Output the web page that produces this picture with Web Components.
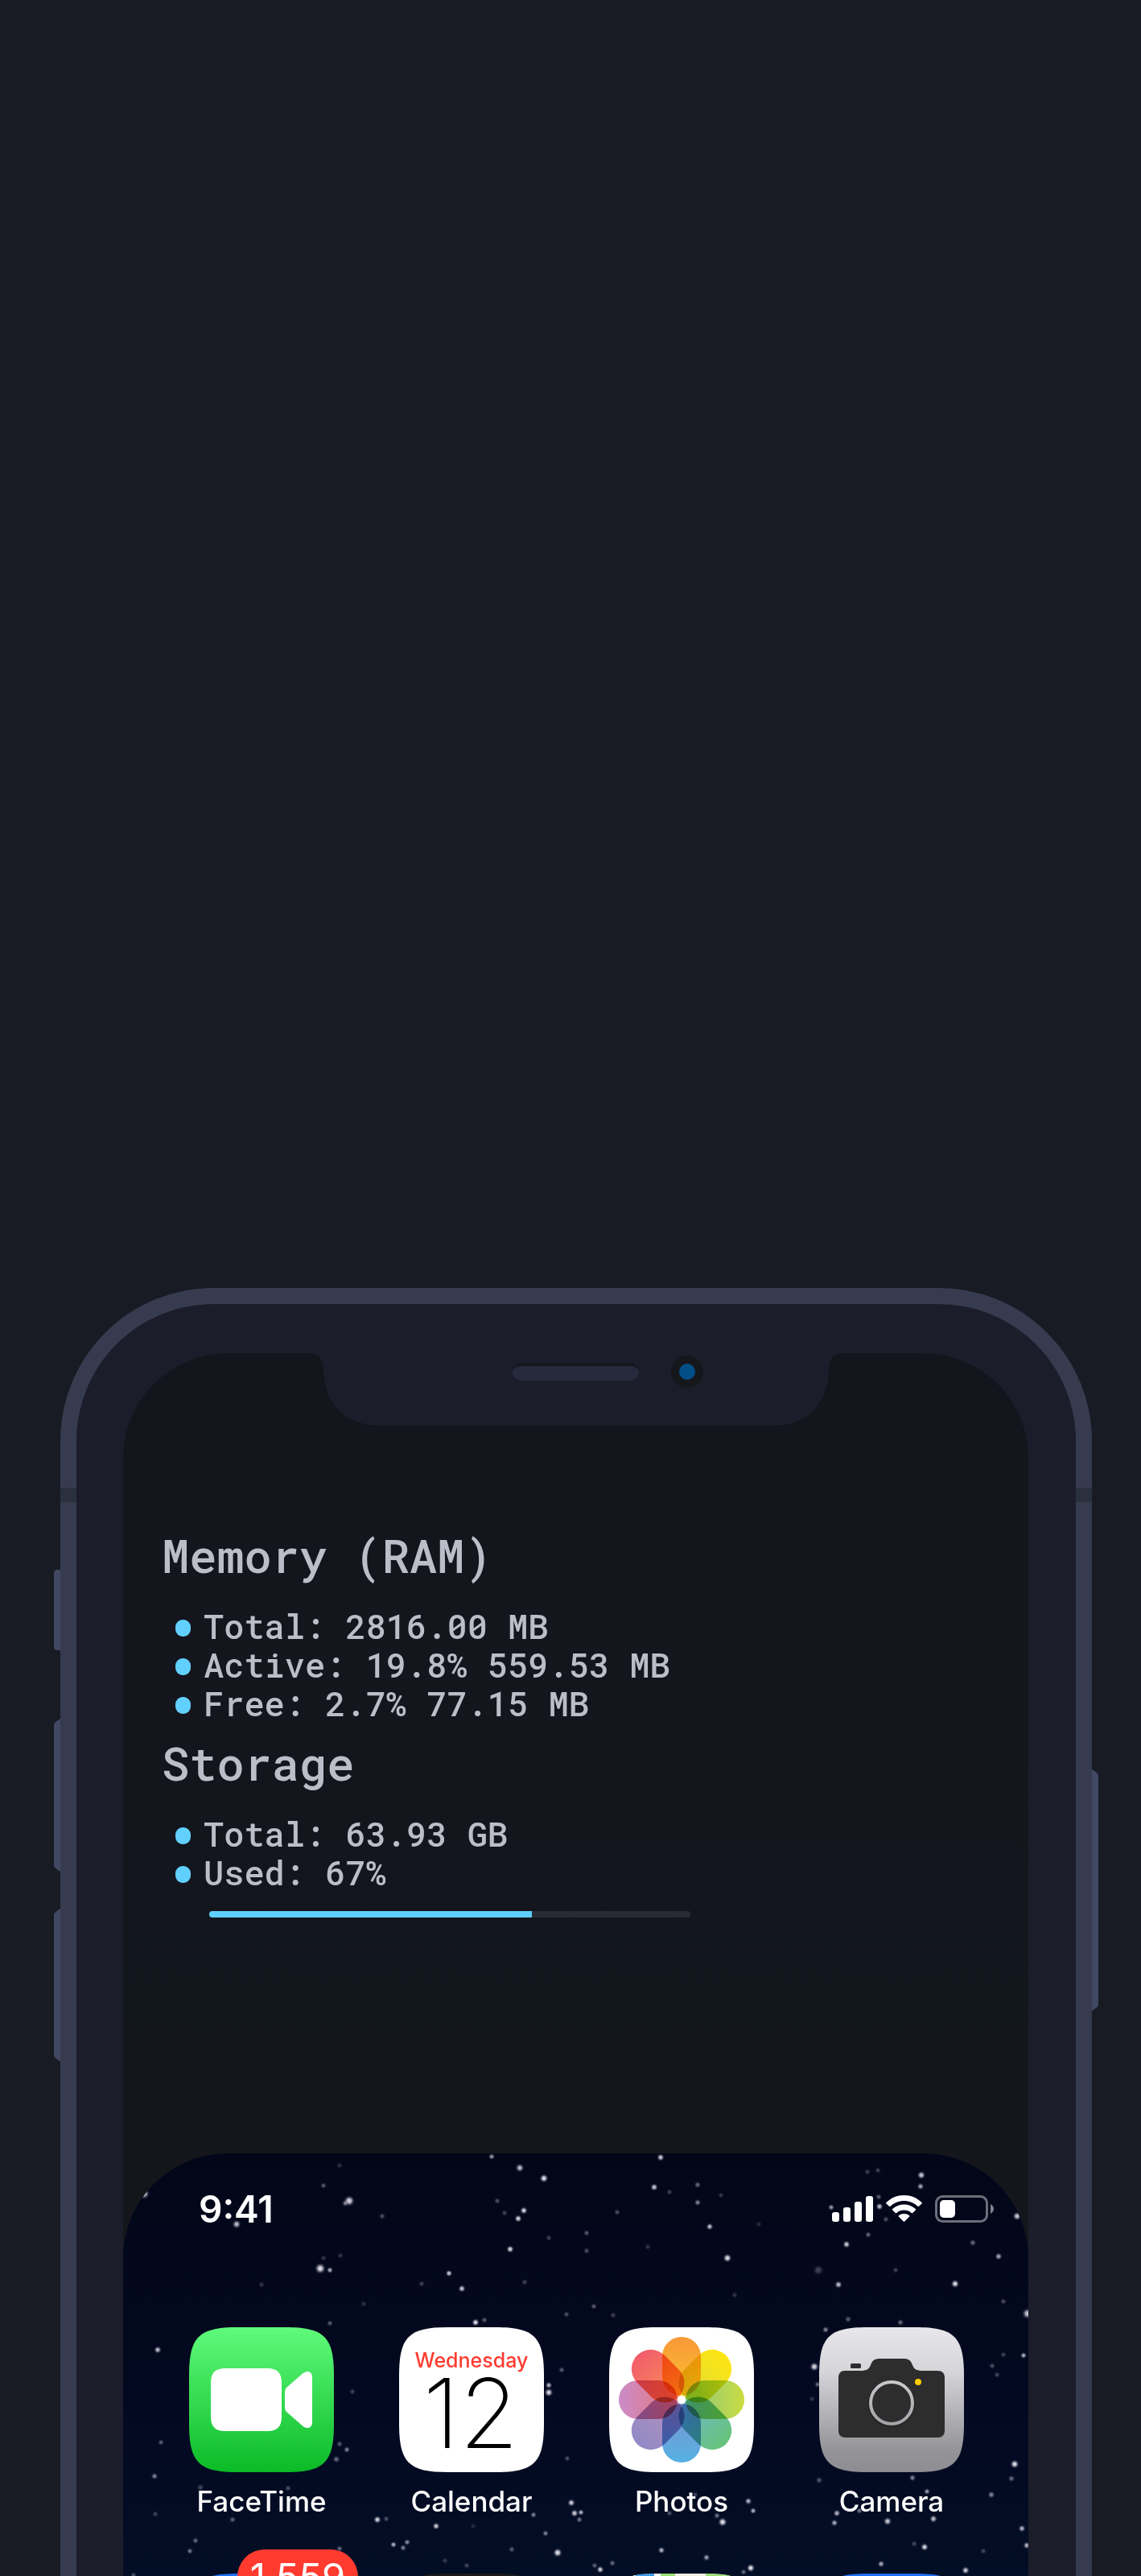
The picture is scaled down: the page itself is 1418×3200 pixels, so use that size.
<!DOCTYPE html>
<html lang="en">
<head>
<meta charset="utf-8">
<meta name="viewport" content="width=device-width, initial-scale=1">
<title>Phone system monitor</title>
<style>
  html, body { margin: 0; background: #181b23; }
  body { font-family: Inter, "Liberation Sans", sans-serif; }
</style>
</head>
<body>
<phone-stage>
  <phone-frame>
    <system-widget>
      <stat-group heading="Memory (RAM)">
        <stat-line>Total: 2816.00 MB</stat-line>
        <stat-line>Active: 19.8% 559.53 MB</stat-line>
        <stat-line>Free: 2.7% 77.15 MB</stat-line>
      </stat-group>
      <stat-group heading="Storage">
        <stat-line>Total: 63.93 GB</stat-line>
        <stat-line>Used: 67%</stat-line>
        <usage-bar slot="after" value="67"></usage-bar>
      </stat-group>
    </system-widget>
    <home-screen>
      <status-bar slot="status">9:41</status-bar>
      <app-icon kind="facetime" label="FaceTime"></app-icon>
      <app-icon kind="calendar" label="Calendar"></app-icon>
      <app-icon kind="photos" label="Photos"></app-icon>
      <app-icon kind="camera" label="Camera"></app-icon>
      <app-icon kind="mail" name="Mail" badge="1,559"></app-icon>
      <app-icon kind="clock" name="Clock"></app-icon>
      <app-icon kind="maps" name="Maps"></app-icon>
      <app-icon kind="weather" name="Weather"></app-icon>
    </home-screen>
  </phone-frame>
</phone-stage>

<script>
class Base extends HTMLElement {
  connectedCallback() {
    if (this.shadowRoot) return;
    this.attachShadow({ mode: 'open' }).innerHTML = this.render();
  }
}

customElements.define('phone-stage', class extends Base {
  render() {
    return `<style>
      :host { display: block; box-sizing: border-box; height: 100vh; min-height: 1900px; overflow: hidden;
              padding: 1600px 61px 0 75px; background: #181b23; }
    </style><slot></slot>`;
  }
});

customElements.define('phone-frame', class extends Base {
  render() {
    return `<style>
      :host { display: block; position: relative; }
      .shell { box-sizing: border-box; border: 20px solid #373b4f; border-radius: 190px; background: #1c1d2a;
               padding: 61px 59px 61px 58px; }
      .screen { position: relative; border-radius: 130px; overflow: hidden;
                background: linear-gradient(#14141c, #14151d 380px, #12161d 800px, #14161c 994px); }
      .band { position: absolute; top: 248px; width: 20px; height: 18px; background: #2b303f; }
      .band.l { left: 0; } .band.r { right: 0; }
      .key { position: absolute; width: 8px; background: #414862; }
      .key.l { right: 100%; clip-path: polygon(100% 0, 2px 4px, 0 7px, 0 calc(100% - 7px), 2px calc(100% - 4px), 100% 100%); }
      .key.r { left: 100%; clip-path: polygon(0 0, 6px 4px, 100% 7px, 100% calc(100% - 7px), 6px calc(100% - 4px), 0 100%); }
      .key.mute { top: 350px; height: 100px; clip-path: none; border-radius: 4px 0 0 4px; }
      .up { top: 535px; height: 190px; }
      .down { top: 771px; height: 190px; }
      .power { top: 598px; height: 300px; }
      .notch { position: absolute; z-index: 2; top: 80px; left: 50%; margin-left: -332px; width: 664px; height: 92px; }
      .notch svg { display: block; }
    </style>
    <div class="key l mute"></div><div class="key l up"></div><div class="key l down"></div><div class="key r power"></div>
    <div class="shell"><div class="screen"><slot></slot></div></div>
    <div class="band l"></div><div class="band r"></div>
    <div class="notch" aria-hidden="true">
      <svg width="664" height="92" viewBox="0 0 664 92">
        <path fill="#1c1d2a" d="M0 0H664V1C653 1 646 7 646 22C645 62 622 91 574 91H90C42 91 19 62 18 22C18 7 11 1 0 1Z"/>
        <rect x="253" y="13" width="157" height="22" rx="11" fill="#15171a"/>
        <path fill="#27293d" d="M264 17H399Q410 17 410 25A11 10 0 0 1 399 35H264A11 10 0 0 1 253 25Q253 17 264 17Z"/>
        <circle cx="470" cy="24" r="20" fill="#16171b"/><circle cx="470" cy="24" r="10" fill="#024f88"/>
      </svg>
    </div>`;
  }
});

customElements.define('system-widget', class extends Base {
  render() {
    return `<style>
      :host { display: flex; flex-direction: column; gap: 12px; box-sizing: border-box; min-height: 994px;
              padding: 213px 48px 120px; color: #bbbdc8; font-weight: 500;
              font-family: "Roboto Mono", "DejaVu Sans Mono", "Liberation Mono", monospace; }
    </style><slot></slot>`;
  }
});

customElements.define('stat-group', class extends Base {
  render() {
    return `<style>
      :host { display: block; }
      h2 { margin: 0 0 26px; font-size: 57px; line-height: 76px; font-weight: inherit; }
      .list { display: flex; flex-direction: column; padding-left: 17px; }
    </style>
    <h2>${this.getAttribute('heading')}</h2>
    <div class="list" role="list"><slot></slot></div>
    <slot name="after"></slot>`;
  }
});

customElements.define('stat-line', class extends Base {
  render() {
    this.setAttribute('role', 'listitem');
    return `<style>
      :host { display: flex; align-items: center; gap: 16px; font-size: 42px; line-height: 48px; white-space: nowrap; }
      i { flex: none; width: 19px; height: 21px; margin-top: 4px; border-radius: 9px; background: #61d0ff; }
    </style><i></i><span><slot></slot></span>`;
  }
});

customElements.define('usage-bar', class extends Base {
  render() {
    return `<style>
      :host { display: block; width: 598px; max-width: 90%; height: 8px; margin: 24px 0 0 59px; border-radius: 4px;
              overflow: hidden; background: #2a2c35; }
      div { width: ${this.getAttribute('value')}%; height: 100%; background: #5fcffc; }
    </style><div></div>`;
  }
});

/* x, y, radius, opacity */
const STARS = [
[26,50,5,.85],[458,4,3,.6],[493,18,4,.75],[523,31,4,.9],[249,40,3,.35],[281,59,5,.85],[276,62,3,.5],[269,15,3,.18],
[322,78,3,.3],[465,59,3,.3],[498,71,3.5,.85],[491,81,3.5,.85],[474,74,3,.25],[481,119,3.5,.85],[529,105,3,.25],
[576,99,3,.35],[576,121,3,.3],[614,73,3,.3],[141,88,4,.75],[245,143,5,.9],[257,145,3,.7],[249,130,3,.2],[270,127,3,.2],
[405,149,3.2,.8],[421,168,3.4,.8],[371,162,3,.25],[499,160,3,.25],[172,163,3,.2],[299,187,3,.18],[438,210,3.5,.9],
[449,207,3,.35],[551,200,3,.3],[585,190,3,.35],[609,201,3,.25],[257,211,3,.35],[43,244,3.5,.75],[285,296,3,.25],
[545,269,3,.35],[529,288,3.2,.7],[529,297,4,.85],[269,361,3,.35],[278,368,3,.5],[265,380,3.5,.4],[47,359,3,.35],
[39,401,3.2,.5],[40,448,3,.25],[96,415,3.5,.25],[205,416,3,.3],[136,455,3.2,.35],[552,379,3,.3],[557,434,3.6,.8],
[561,447,3.6,.8],[569,446,3,.7],[567,455,3,.45],[510,449,3,.5],[316,455,3.6,.85],[327,454,3,.3],[389,463,3.4,.8],
[435,463,3,.15],[336,486,3,.7],[353,483,3,.55],[348,490,3,.5],[525,472,3,.5],[540,496,4.2,.9],[483,492,3,.35],
[90,481,3,.4],[83,494,3,.45],[593,517,3.4,.8],[608,509,3,.4],[586,512,3,.35],[427,512,3,.25],[269,491,3,.4],
[400,506,3,.2],[13,524,3,.3],[668,5,3.5,.8],[660,42,3.5,.8],[714,39,3.2,.4],[714,61,3.2,.5],[679,48,3,.25],
[729,91,3.3,.75],[751,130,4,.9],[743,52,3,.2],[925,23,3,.25],[938,21,3,.25],[992,27,3.8,.8],[991,41,3.3,.65],
[940,66,3.4,.75],[939,54,3,.35],[948,82,3,.3],[880,67,3,.6],[926,101,3,.4],[899,113,3.5,.8],[889,163,3.5,.75],
[1034,162,3.8,.9],[1056,111,3.2,.4],[1088,128,3.4,.65],[1111,78,4,.8],[864,145,5,.25],[960,145,3,.25],[790,88,3,.15],
[652,116,3,.2],[760,176,3,.2],[901,206,3.2,.35],[966,210,3.2,.4],[1094,184,3,.3],[1124,199,5,.8],[873,219,3.2,.5],
[859,265,4.2,.85],[863,287,3,.4],[1119,251,3,.7],[1080,264,3,.3],[1086,275,3,.25],[1094,250,3,.25],[856,305,3,.2],
[1108,386,4,.9],[1104,404,3.2,.4],[1079,424,3.4,.5],[981,403,3.2,.5],[999,420,3,.6],[915,444,3,.45],[865,406,3.4,.3],
[777,432,3.3,.7],[783,444,3,.7],[679,447,3,.3],[738,450,3,.45],[745,458,4.2,.9],[887,447,3.4,.7],[884,459,3.3,.65],
[950,457,3.8,.8],[1007,454,3.6,.75],[1117,466,3.4,.7],[996,489,3.6,.85],[983,485,3,.25],[1069,494,3,.25],
[1123,487,3.4,.7],[669,493,3.3,.7],[725,502,3.3,.6],[780,515,3.8,.9],[942,510,3.3,.65],[1047,518,3.6,.8],
[771,520,3,.4],[711,424,3,.25]
];

customElements.define('home-screen', class extends Base {
  render() {
    const dots = STARS.map(([x, y, r, o]) => `<circle cx="${x}" cy="${y}" r="${r * 1.4}" opacity="${o}" fill="url(#star)"/>`).join('');
    return `<style>
      :host { display: block; position: relative; overflow: hidden; border-radius: 130px 130px 0 0;
              background: linear-gradient(#020618, #030921 330px, #020e25 525px); }
      .sky { position: absolute; inset: 0; width: 100%; height: 525px; }
      .content { position: relative; }
      .apps { display: grid; grid-template-columns: repeat(4, 180px); justify-content: space-between;
              row-gap: 70px; padding: 117px 80px 120px 82px; }
    </style>
    <svg class="sky" viewBox="0 0 1125 525" preserveAspectRatio="xMidYMin slice" aria-hidden="true">
      <defs><radialGradient id="star"><stop offset="0" stop-color="#fff"/><stop offset=".35" stop-color="#eeebf6" stop-opacity=".9"/>
      <stop offset=".7" stop-color="#b9b6cf" stop-opacity=".3"/><stop offset="1" stop-color="#8a88a8" stop-opacity="0"/></radialGradient></defs>${dots}
    </svg>
    <div class="content"><slot name="status"></slot><div class="apps"><slot></slot></div></div>`;
  }
});

customElements.define('status-bar', class extends Base {
  render() {
    return `<style>
      :host { display: flex; justify-content: space-between; align-items: center; padding: 39px 43px 0 94px; color: #fff;
              font-size: 46px; line-height: 60px; font-weight: 600; }
      .icons { display: flex; align-items: center; gap: 16px; }
      svg { display: block; }
    </style>
    <span><slot></slot></span>
    <span class="icons">
      <svg width="51" height="34" viewBox="0 0 51 34" fill="#fff"><rect y="21" width="9" height="12" rx="3"/><rect x="14" y="15" width="9" height="18" rx="3"/><rect x="28" y="8" width="9" height="25" rx="3"/><rect x="42" y="1" width="9" height="32" rx="3"/></svg>
      <svg width="45" height="34" viewBox="0 0 45 34" fill="#fff"><path d="M22.500 0C31 0 38.500 3.200 44.500 9Q45.200 9.700 44.500 10.400L41 13.800Q40.300 14.400 39.600 13.800C35 9.500 29 7 22.500 7S10 9.500 5.400 13.800Q4.700 14.400 4 13.800L.5 10.400Q-.2 9.700.5 9C6.500 3.200 14 0 22.500 0Z"/><path d="M22.500 11.500C28 11.500 33 13.500 36.800 17Q37.500 17.700 36.800 18.400L33.200 21.900Q32.500 22.500 31.800 21.900C29.200 19.700 26 18.500 22.500 18.500S15.800 19.700 13.200 21.900Q12.500 22.500 11.800 21.900L8.200 18.400Q7.500 17.700 8.200 17C12 13.500 17 11.500 22.500 11.500Z"/><path d="M22.500 23C25 23 27.300 23.800 29.100 25.200Q29.900 25.900 29.200 26.600L23.200 32.600Q22.500 33.200 21.800 32.600L15.800 26.600Q15.100 25.900 15.900 25.200C17.700 23.800 20 23 22.500 23Z"/></svg>
      <svg width="73" height="34" viewBox="0 0 73 34"><rect x="1.500" y="1.500" width="63" height="31" rx="8" fill="none" stroke="#fff" stroke-opacity=".42" stroke-width="3"/><rect x="6" y="6" width="19" height="22" rx="5" fill="#fff"/><path d="M69 11Q73 13.500 73 17T69 23Z" fill="#fff" fill-opacity=".5"/></svg>
    </span>`;
  }
});

const TILE = 'M60 0H120C168 0 180 12 180 60V120C180 168 168 180 120 180H60C12 180 0 168 0 120V60C0 12 12 0 60 0Z';
const PETALS = [
  [0, '#f89838', '#fcc430'], [45, '#ffe512', '#dcdc3a'], [90, '#c9dc40', '#8ac884'], [135, '#66c378', '#72b8d0'],
  [180, '#55b1e4', '#7f92cc'], [225, '#8f8ac6', '#bb8fbc'], [270, '#ca8cc8', '#e8767a'], [315, '#f35c6c', '#f69252']
];
const ART = {
  facetime: `<defs><linearGradient id="g" x2="0" y2="1"><stop stop-color="#5ffb7b"/><stop offset="1" stop-color="#0bba27"/></linearGradient></defs>
    <path d="${TILE}" fill="url(#g)"/>
    <path fill="#fff" d="M45 51H97C110 51 115 57 115 69V111C115 123 110 129 97 129H45C32 129 27 123 27 111V69C27 57 32 51 45 51Z"/>
    <path fill="#fff" d="M121 75L141 57.500C147 52.500 153 55 153 62V118C153 125 147 127.500 141 122.500L121 105Q119 103 119 100V80Q119 77 121 75Z"/>`,
  calendar: `<path d="${TILE}" fill="#fff"/>
    <text x="90" y="50" text-anchor="middle" font-size="25" font-weight="500" fill="#ff3b30">Wednesday</text>
    <text x="89" y="150" text-anchor="middle" font-size="119" font-weight="200" fill="#000">12</text>`,
  photos: `<defs>${PETALS.map(([a, c, d], i) => `<linearGradient id="p${i}" x2="0" y2="1"><stop stop-color="${c}"/><stop offset="1" stop-color="${d}"/></linearGradient>`).join('')}</defs>
    <path d="${TILE}" fill="#fff"/><g style="isolation:isolate">
    ${PETALS.map(([a], i) => `<rect style="mix-blend-mode:multiply" x="66" y="12" width="48" height="73" rx="24" fill="url(#p${i})" transform="rotate(${a} 90 90)"/>`).join('')}</g>
    <circle cx="90" cy="90" r="5" fill="#fff"/>`,
  camera: `<defs><linearGradient id="g" x2="0" y2="1"><stop stop-color="#e7e6eb"/><stop offset=".3" stop-color="#d6d5da"/><stop offset=".85" stop-color="#949397"/><stop offset="1" stop-color="#8e8d92"/></linearGradient>
    <linearGradient id="r" x2="0" y2="1"><stop stop-color="#c9c8cc"/><stop offset="1" stop-color="#a4a3a8"/></linearGradient></defs>
    <path d="${TILE}" fill="url(#g)"/>
    <path fill="#2d2d2d" d="M32 54H52C59 54 62 52 64 47C66 41 69 39 76 39H105C111 39 114 41 116 47C118 52 121 54 128 54H147C153 54 156 57 156 63V128C156 134 153 137 147 137H33C27 137 24 134 24 128V63C24 57 27 54 32 54Z"/>
    <rect x="39" y="45" width="13" height="6" rx="1.500" fill="#2d2d2d"/>
    <circle cx="90" cy="95" r="27" fill="none" stroke="#222" stroke-width="5" opacity=".6"/>
    <circle cx="90" cy="94" r="26" fill="#2d2d2d" stroke="url(#r)" stroke-width="4"/><circle cx="123" cy="68" r="4" fill="#ffcc00"/>`,
  mail: `<path d="${TILE}" fill="#1f70f4"/>`,
  clock: `<path d="${TILE}" fill="#1c1c1c"/>`,
  maps: `<defs><clipPath id="c"><path d="${TILE}"/></clipPath></defs><g clip-path="url(#c)"><path fill="#f2f0e6" d="M0 0H180V180H0Z"/>
    <path fill="#3a9be8" d="M33 0H56V180H33Z"/><path fill="#fff" d="M0 0H33V180H0ZM56 0H64V180H56Z"/><path fill="#9be076" d="M64 0H82V180H64ZM120 0H180V180H120Z"/></g>`,
  weather: `<path d="${TILE}" fill="#1f6ff2"/>`
};

customElements.define('app-icon', class extends Base {
  render() {
    const label = this.getAttribute('label'), badge = this.getAttribute('badge'), name = this.getAttribute('name');
    return `<style>
      :host { display: block; }
      button { display: flex; flex-direction: column; align-items: center; gap: 16px; position: relative; width: 180px;
               margin: 0; padding: 0; border: 0; background: none; color: #fff; font: 500 35px/40px Inter, "Liberation Sans", sans-serif; white-space: nowrap; }
      svg { display: block; width: 180px; height: 180px; font-family: Inter, "Liberation Sans", sans-serif; }
      .badge { position: absolute; top: -30px; right: -30px; width: 150px; border-radius: 34px; background: #ff3b30;
               font-size: 47px; line-height: 68px; font-weight: 400; text-align: center; }
    </style>
    <button type="button"${name ? ` aria-label="${name}"` : ''}>
      <svg viewBox="0 0 180 180">${ART[this.getAttribute('kind')]}</svg>
      ${label ? `<span>${label}</span>` : ''}${badge ? `<span class="badge">${badge}</span>` : ''}
    </button>`;
  }
});
</script>
</body>
</html>
